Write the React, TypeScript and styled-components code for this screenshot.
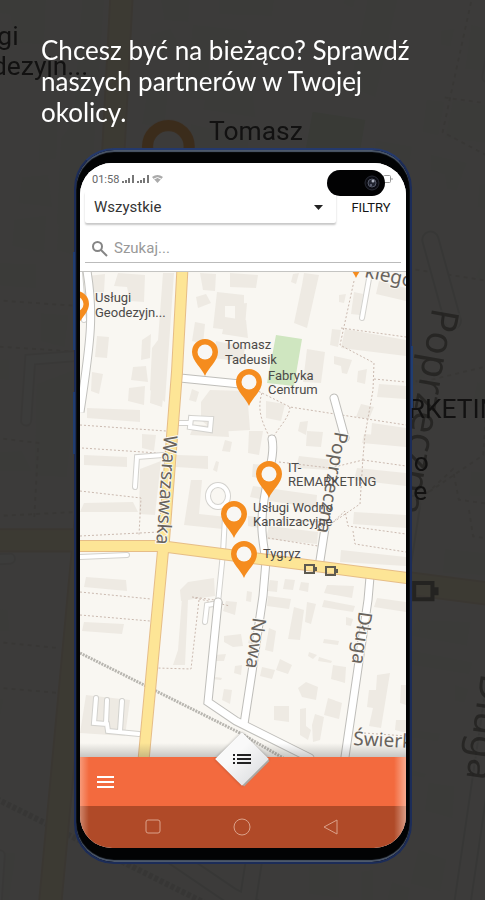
import React from 'react';
import styled, { createGlobalStyle } from 'styled-components';

const GlobalStyle = createGlobalStyle`
  * { box-sizing: border-box; }
  body { margin: 0; background: #3b3938; }
`;

const Page = styled.main`
  position: relative;
  display: flex;
  flex-direction: column;
  min-height: 100vh;
  padding-bottom: 36px;
  overflow: hidden;
  font-family: Roboto, sans-serif;
`;

const Backdrop = styled.div`
  position: absolute;
  inset: 0;
  svg { display: block; width: 100%; height: 100%; }
  &::after { content: ''; position: absolute; inset: 0; background: rgba(0, 0, 0, 0.76); }
`;

const Heading = styled.h1`
  position: relative;
  height: 148px;
  margin: 0;
  padding: 35px 72px 0 41px;
  font: 400 26px/31px Lato, sans-serif;
  color: #fff;
`;

const Phone = styled.section`
  position: relative;
  flex: 1;
  display: flex;
  flex-direction: column;
  margin: 0 73px 0 74px;
  padding: 13px 4px 14px;
  border: 2px solid #1c2c58;
  border-top-color: #24396c;
  border-radius: 40px;
  background: #020304;
  box-shadow: inset 0 2px 1px #4d596b, inset 0 -2px 1px #4d596b;
`;

const SideKey = styled.i<{ $top: number; $height: number; $right?: boolean }>`
  position: absolute;
  ${p => (p.$right ? 'right' : 'left')}: -3px;
  top: ${p => p.$top}px;
  width: 2px;
  height: ${p => p.$height}px;
  background: #203d70;
`;

const Screen = styled.div`
  position: relative;
  flex: 1;
  display: flex;
  flex-direction: column;
  overflow: hidden;
  border-radius: 32px;
  background: #fff;
`;

const TopPanel = styled.header`
  position: relative;
  height: 109px;
  border-bottom: 1px solid #c4c4c2;
  background: #fff;
`;

const StatusBar = styled.div`
  display: flex;
  align-items: center;
  gap: 3px;
  height: 28px;
  padding: 4px 13px 0 12px;
  font-size: 11px;
  color: #666;
  svg:last-child { margin-left: auto; }
`;

const Cutout = styled.div`
  position: absolute;
  top: 7px;
  right: 21px;
  width: 58px;
  height: 26px;
  border-radius: 13px;
  background: #020203;
  svg { position: absolute; right: 4px; top: 4px; }
`;

const FilterRow = styled.div`
  display: flex;
  align-items: center;
  padding-left: 5px;
`;

const SelectBox = styled.div`
  position: relative;
  flex: 1;
  height: 32px;
  border-radius: 2px;
  box-shadow: 0 2px 2px rgba(0, 0, 0, 0.22);
  svg { position: absolute; right: 13px; top: 14px; pointer-events: none; }
`;

const Select = styled.select`
  width: 100%;
  height: 100%;
  padding: 0 9px;
  border: 0;
  appearance: none;
  background: transparent;
  font: 400 15px Roboto, sans-serif;
  color: #333;
`;

const FilterButton = styled.button`
  width: 70px;
  height: 32px;
  padding: 0;
  border: 0;
  background: none;
  font: 400 13px Roboto, sans-serif;
  color: #151515;
`;

const SearchField = styled.label`
  display: flex;
  align-items: center;
  gap: 6px;
  height: 29px;
  margin: 11px 5px 0;
  padding-left: 6px;
  border-bottom: 1px solid #bbb;
`;

const SearchInput = styled.input`
  flex: 1;
  min-width: 0;
  padding: 0;
  border: 0;
  outline: 0;
  background: none;
  font: 400 15px Roboto, sans-serif;
  &::placeholder { color: #999; opacity: 1; }
`;

const MapArea = styled.div`
  flex: 1 1 0;
  min-height: 320px;
  position: relative;
  svg { position: absolute; width: 100%; height: 100%; }
  &::after {
    content: '';
    position: absolute;
    inset: auto 0 0;
    height: 14px;
    background: linear-gradient(transparent, rgba(70, 70, 70, 0.28));
  }
`;

const ActionBar = styled.div`
  position: relative;
  display: flex;
  align-items: center;
  height: 49px;
  padding-left: 11px;
  background: #f36a3e;
`;

const IconButton = styled.button`
  display: grid;
  place-items: center;
  width: 28px;
  height: 28px;
  padding: 0;
  border: 0;
  background: none;
`;

const ListButton = styled.button`
  position: absolute;
  top: -17px;
  left: calc(50% - 20px);
  display: grid;
  place-items: center;
  width: 38px;
  height: 38px;
  padding: 0;
  border: 0;
  transform: rotate(45deg);
  background: linear-gradient(90deg, #f9f9f9 30%, #e4e5e7);
  box-shadow: 3px 0 0 -1px #aaa8a3, 0 0 3px rgba(0, 0, 0, 0.3);
  svg { transform: rotate(-45deg); }
`;

const SystemNav = styled.nav`
  display: flex;
  justify-content: center;
  gap: 61px;
  align-items: center;
  height: 42px;
  padding-right: 2px;
  background: #b04a28;
`;

const Glare = styled.div`
  position: absolute;
  inset: auto 0 0;
  height: 91px;
  pointer-events: none;
  background: linear-gradient(90deg, rgba(255, 225, 210, 0.4), transparent 9px, transparent calc(100% - 12px), rgba(255, 225, 210, 0.55));
`;

/* footprints of the buildings, as point lists */
const buildings = [
  '88,276 105,274 104,292 92,292', '97,336 109,337 107,358 95,357', '142,340 151,334 150,358 141,360',
  '163,273 174,273 165,402 150,390 152,348 158,340', '133,367 146,366 148,382 131,380', '92,372 103,374 99,394 91,391',
  '129,388 145,386 144,405 128,401', '151,388 164,390 162,407 150,403', '87,408 140,410 140,422 87,418',
  '118,273 145,275 144,302 130,301 127,287 114,286', '200,273 216,274 215,291 203,290', '196,297 206,294 211,303 198,308',
  '217,292 244,295 244,306 225,306 225,317 245,320 244,332 213,328', '195,322 205,324 203,344 192,341', '216,341 245,347 243,362 214,358',
  '225,320 246,320 248,338 222,334', '192,389 199,392 196,402 189,400', '210,390 247,391 250,430 215,432 201,420 201,402',
  '230,273 258,275 256,288 230,287', '235,304 247,303 245,326 235,325', '304,273 319,275 307,328 294,323 302,285',
  '293,274 299,273 296,284 291,282', '339,295 346,294 344,303 339,302', '354,292 363,294 360,315 351,314',
  '379,281 406,288 406,301 376,294', '345,329 406,340 406,356 341,348', '332,329 341,330 338,347 330,345',
  '307,349 325,352 321,383 303,382', '334,356 352,360 347,374 342,373 341,366 334,364', '358,371 367,369 365,384 357,382',
  '379,384 406,386 406,399 377,397', '361,404 374,407 369,419 356,417', '372,423 406,428 406,440 371,435',
  '266,401 285,404 281,421 266,418', '300,422 308,421 306,435 298,431', '84,455 127,457 127,467 84,465', '142,434 156,435 154,451 142,448',
  '140,469 161,461 155,515 139,514', '84,503 133,502 138,512 80,512', '194,425 228,426 229,437 190,435', '177,455 208,456 208,469 176,467',
  '191,480 202,480 199,514 227,517 223,529 184,525', '225,440 232,442 230,452 222,451', '216,461 219,462 217,472 213,470',
  '249,431 263,431 259,455 248,453', '307,431 323,432 321,447 306,446', '299,456 333,460 330,470 296,468', '253,464 265,465 263,478 252,477',
  '253,486 317,495 316,508 270,501 250,497', '248,516 259,517 258,528 248,526', '269,526 318,532 317,544 266,539',
  '364,434 406,437 406,447 362,443', '357,468 406,473 406,486 354,480', '354,512 406,515 406,528 353,524', '341,550 406,557 406,566 340,562',
  '86,577 126,580 127,591 84,587', '188,582 214,578 215,596 181,601 180,590', '182,598 188,600 185,665 173,665 178,650',
  '84,622 124,624 122,634 82,631', '86,695 130,700 125,736 80,733', '226,601 237,602 235,615 223,611',
  '224,636 241,634 243,646 233,647 224,642', '214,655 226,654 224,661 214,661', '235,666 242,665 241,675 234,673',
  '224,689 232,690 230,704 222,700', '216,677 222,678 221,680 212,679', '247,591 252,592 251,602 246,601', '268,596 291,599 289,609 267,606',
  '270,580 278,581 277,592 268,591', '285,579 295,580 293,590 283,589', '301,582 309,583 308,592 299,590', '327,585 354,586 352,598 324,593',
  '324,600 355,606 353,612 322,607', '294,607 304,610 300,640 288,639', '307,602 316,604 311,624 305,622', '269,628 276,631 273,652 265,650',
  '251,632 258,633 254,645 248,643', '377,598 406,602 406,612 374,607', '346,617 353,619 351,626 346,625', '324,639 339,641 338,645 323,643',
  '309,652 317,655 313,659 308,656', '319,657 332,661 331,663 318,661', '280,659 292,665 288,674 276,670', '262,667 275,670 272,679 260,676',
  '333,665 346,667 345,683 331,679', '306,682 318,687 316,700 302,697 298,688', '274,706 289,706 289,722 274,720',
  '328,698 342,703 339,719 324,715', '300,709 306,708 306,726 311,730 308,740 300,735', '315,714 324,717 320,740 313,742 312,725',
  '377,675 390,673 381,728 369,726 373,708 367,707 369,690 376,690', '401,685 406,685 406,705 400,703', '396,720 406,720 406,733 395,730',
];

/* footpaths */
const paths = [
  'M80 425 166 431', 'M82 448 158 453', 'M80 491 141 498 139 535', 'M80 536 160 532', 'M80 592 151 599', 'M80 615 150 621',
  'M192 597 215 600M199 600 191 669 157 668', 'M354 281 340 345 374 363 373 390 365 435 363 457 360 504 332 523 280 519',
  'M341 328 406 337', 'M374 379 406 382', 'M248 386 262 393 290 407 406 425', 'M290 407C289 420 275 430 272 441M262 393C255 414 267 430 271 441',
  'M363 460 406 466', 'M279 462 330 468 363 460', 'M332 523 345 511 348 526 406 534', 'M353 531 355 544 406 552', 'M268 538 318 546', 'M364 733 406 736', 'M195 598 230 606',
];

const streets = [
  'M180 378 250 385', 'M272 439C275 453 269 470 264 500 260 525 262 537 266 561L263 596 252 672 244 724', 'M325 528 319 567',
  'M370 577 368 600 357 675 345 757', 'M334 398 345 438', 'M218 602 208 702 236 721 310 758',
];

const lanes = [
  'M370 273 362 318', 'M135 487 137 457 163 455', 'M205 622 207 605 220 603', 'M225 517 223 553 218 603', 'M80 557 127 555',
  'M177 423H189M191 418 211 419 210 430 190 427Z', 'M96 698 94 723 107 724 108 731 139 734M107 700 106 724M122 701 120 731', 'M80 272 84 320',
];

const PinMark = ({ x, y }: { x: number; y: number }) => (
  <g transform={`translate(${x} ${y})`}>
    <path d="M0 24C-3 16-13 9-13 0A13 13 0 0 1 13 0C13 9 3 16 0 24Z" fill="#f58c1e" />
    <circle r="7.5" fill="#f8f7f4" />
  </g>
);

const pins = [[76, 304], [205, 352], [249, 382], [269, 474], [234, 514], [244, 554], [356, 254]];

const labels: [number, number, string][] = [
  [95, 302, 'Usługi'], [95, 317, 'Geodezyjn...'], [225, 349, 'Tomasz'], [225, 364, 'Tadeusik'],
  [268, 380, 'Fabryka'], [268, 394, 'Centrum'], [288, 472, 'IT-'], [288, 486, 'REMARKETING'],
  [253, 512, 'Usługi Wodno'], [253, 526, 'Kanalizacyjne'], [263, 558, 'Tygryz'],
];

const streetNames: [number, number, number, number, string][] = [
  [164, 435, 94, 19, 'Warszawska'], [335, 431, 100, 19, 'Poprzeczna'], [253, 617, 98, 19, 'Nowa'],
  [359, 611, 98, 19, 'Długa'], [353, 745, 3, 19, 'Świerkowa'], [364, 277, 12, 19, 'kiego'],
];

/* "faded" keeps the labels strong and lets roads and buildings recede */
const CityMap = ({ viewBox, faded = false }: { viewBox: string; faded?: boolean }) => (
  <svg viewBox={viewBox} preserveAspectRatio="xMidYMid slice" role="img" aria-label="Mapa">
    <rect x="0" y="180" width="500" height="620" fill="#f9f7f2" />
    <g opacity={faded ? 0.3 : 1}>
      {buildings.map(b => <polygon key={b} points={b} fill={faded ? '#f3efea' : '#eeeae3'} />)}
      <path d="M276 335 302 339 294 386 267 383Z" fill="#cfe6c0" />
      <g fill="none" stroke="#cbbab0" strokeDasharray="2 2">{paths.map(d => <path key={d} d={d} />)}</g>
      <path d="M80 653 142 684 240 733 290 762" fill="none" stroke="#b8b6b0" strokeWidth="3" strokeDasharray="2 1" />
      <g fill="none" stroke="#d3d2ce" strokeWidth="6" strokeLinecap="round">{lanes.map(d => <path key={d} d={d} />)}<ellipse cx="218" cy="496" rx="10" ry="11" /></g>
      <g fill="none" stroke="#fff" strokeWidth="4" strokeLinecap="round">{lanes.map(d => <path key={d} d={d} />)}<ellipse cx="218" cy="496" rx="10" ry="11" /></g>
      <path d="M85 260C95 310 91 340 80 412" fill="none" stroke="#c2c1bd" strokeWidth="9" />
      <path d="M85 260C95 310 91 340 80 412" fill="none" stroke="#fff" strokeWidth="7" />
      <g fill="none" stroke="#bfbeba" strokeWidth="9" strokeLinecap="round">{streets.map(d => <path key={d} d={d} />)}</g>
      <g fill="none" stroke={faded ? '#f9f7f2' : '#fff'} strokeWidth="7" strokeLinecap="round">{streets.map(d => <path key={d} d={d} />)}</g>
      <g fill="none" stroke="#e6bd87" strokeWidth="12">
        <path d="M183 258 177 372 164 540 143 766" /><path d="M0 546H160L245 557 500 590" />
      </g>
      <g fill="none" stroke="#fde596" strokeWidth="10">
        <path d="M183 258 177 372 164 540 143 766" /><path d="M0 546H160L245 557 500 590" />
      </g>
    </g>
    <g fill="none" stroke={faded ? '#96938c' : '#5d5a50'} strokeWidth="2">
      <path d="M305 565h9v8h-9zM326 567h9v8h-9zM316 567v4M337 569v4" />
    </g>
    <g opacity={faded ? 0.6 : 1}>
      {streetNames.filter(([x]) => !faded || x > 200).map(([x, y, angle, size, name]) => (
        <text key={name} x={x} y={y} transform={`rotate(${angle} ${x} ${y})`} fontFamily="Noto Sans, sans-serif" fontSize={size} fill="#68635d" stroke="#f9f7f2" strokeWidth="2" paintOrder="stroke">{name}</text>
      ))}
    </g>
    <g opacity={faded ? 0.6 : 1}>
      {pins.map(([x, y]) => <PinMark key={`${x}-${y}`} x={x} y={y} />)}
    </g>
    <g fontFamily="Roboto, sans-serif" fontSize="13" fill="#4c4a48">
      {labels.map(([x, y, text]) => <text key={`${x}-${y}`} x={x} y={y}>{text}</text>)}
    </g>
  </svg>
);

const Signal = () => (
  <svg width="12" height="8" viewBox="0 0 12 8" fill="#777" aria-hidden="true"><path d="M0 6h2v2H0zM3 5h2v3H3zM6 3h2v5H6zM10 0h2v8h-2z" /></svg>
);

export default function App() {
  return (
    <>
      <GlobalStyle />
      <Page>
        <Backdrop aria-hidden="true"><CityMap faded viewBox="122 280 239 443" /></Backdrop>
        <Heading>Chcesz być na bieżąco? Sprawdź naszych partnerów w Twojej okolicy.</Heading>
        <Phone>
          <SideKey $top={102} $height={98} />
          <SideKey $top={242} $height={62} />
          <SideKey $top={196} $height={62} $right />
          <Screen>
            <TopPanel>
              <StatusBar>
                <span>01:58</span><Signal /><Signal />
                <svg width="11" height="8" viewBox="0 0 11 8" aria-hidden="true"><path d="M0 2Q5.500-2 11 2L5.500 8Z" fill="#aaa" /><path d="M2 4Q5.500 1 9 4" fill="none" stroke="#fff" /></svg>
                <svg width="10" height="8" viewBox="0 0 10 8" fill="none" stroke="#999" aria-hidden="true"><rect x="0.500" y="0.500" width="7" height="7" rx="1" /><path d="M9 3v2" /></svg>
              </StatusBar>
              <FilterRow>
                <SelectBox>
                  <Select aria-label="Kategoria" defaultValue="all"><option value="all">Wszystkie</option></Select>
                  <svg width="9" height="5" viewBox="0 0 9 5" aria-hidden="true"><path d="M0 0h9L4.500 5Z" fill="#222" /></svg>
                </SelectBox>
                <FilterButton type="button">FILTRY</FilterButton>
              </FilterRow>
              <SearchField>
                <svg width="17" height="17" viewBox="0 0 17 17" fill="none" stroke="#858585" strokeWidth="2" aria-hidden="true"><circle cx="6.500" cy="6.500" r="4.500" /><path d="m10 10 6 6" /></svg>
                <SearchInput type="search" placeholder="Szukaj..." aria-label="Szukaj" />
              </SearchField>
              <Cutout>
                <svg width="18" height="18" viewBox="0 0 18 18" aria-hidden="true"><circle cx="9" cy="9" r="7" fill="#0c0d14" stroke="#292b35" /><circle cx="9" cy="9" r="4" fill="#20232f" stroke="#555968" /><circle cx="10" cy="7" r="1.500" fill="#a8adbb" /><circle cx="8" cy="11" r="1" fill="#6d7184" /></svg>
              </Cutout>
            </TopPanel>
            <MapArea><CityMap viewBox="80 272 326 485" /></MapArea>
            <ActionBar>
              <IconButton type="button" aria-label="Menu">
                <svg width="17" height="12" viewBox="0 0 17 12" fill="#fff"><path d="M0 0h17v2H0zM0 5h17v2H0zM0 10h17v2H0z" /></svg>
              </IconButton>
              <ListButton type="button" aria-label="Lista">
                <svg width="18" height="12" viewBox="0 0 18 12" fill="#222"><path d="M0 1h2v2H0zM4 1h14v2H4zM0 5h2v2H0zM4 5h14v2H4zM0 9h2v2H0zM4 9h14v2H4z" /></svg>
              </ListButton>
            </ActionBar>
            <SystemNav aria-label="System">
              <IconButton type="button" aria-label="Ostatnie"><svg width="18" height="18" viewBox="0 0 18 18" fill="none" stroke="#dba18a"><rect x="2" y="2" width="14" height="13" rx="2" /></svg></IconButton>
              <IconButton type="button" aria-label="Ekran główny"><svg width="18" height="18" viewBox="0 0 18 18" fill="none" stroke="#dba18a"><circle cx="9" cy="9" r="8" /></svg></IconButton>
              <IconButton type="button" aria-label="Wstecz"><svg width="18" height="18" viewBox="0 0 18 18" fill="none" stroke="#dba18a"><path d="M15 2v14L2 9Z" /></svg></IconButton>
            </SystemNav>
            <Glare />
          </Screen>
        </Phone>
      </Page>
    </>
  );
}
